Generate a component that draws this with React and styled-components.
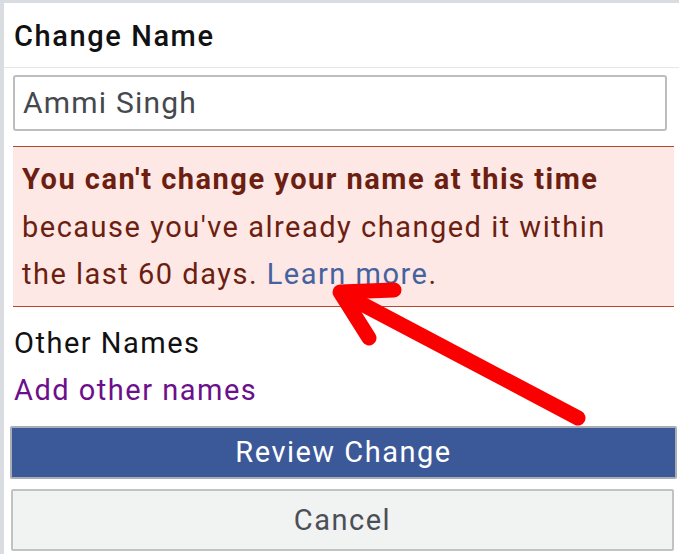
import React from "react";
import styled, { createGlobalStyle } from "styled-components";

const GlobalStyle = createGlobalStyle`
  html, body {
    margin: 0;
    padding: 0;
    background: #d9dde1;
  }
  body {
    font-family: Roboto, "Noto Sans", sans-serif;
    letter-spacing: 1.5px;
  }
`;

const Page = styled.div`
  position: relative;
  width: 679px;
  height: 554px;
  overflow: hidden;
  padding: 3px 0 0 4px;
  box-sizing: border-box;
`;

const Panel = styled.div`
  background: #fff;
  height: 100%;
  display: flex;
  flex-direction: column;
`;

const Header = styled.div`
  height: 64px;
  line-height: 66px;
  padding-left: 10px;
  font-size: 29px;
  font-weight: 500;
  letter-spacing: 1.6px;
  color: #111;
  border-bottom: 1px solid #e4e6e8;
`;

const Body = styled.div`
  display: flex;
  flex-direction: column;
  padding: 7px 0 0 9px;
`;

const NameInput = styled.div`
  width: 654px;
  height: 56px;
  box-sizing: border-box;
  border: 2px solid #bdbdbd;
  border-radius: 3px;
  padding-left: 8px;
  font-size: 30px;
  line-height: 52px;
  letter-spacing: 1.2px;
  color: #45494e;
`;

const Notice = styled.div`
  margin-top: 15px;
  width: 661px;
  box-sizing: border-box;
  background: #fde8e6;
  border-top: 1px solid #b5472f;
  border-bottom: 1px solid #b5472f;
  padding: 9px 9px 7px;
  font-size: 29px;
  line-height: 47.5px;
  color: #6c1f10;
  strong {
    font-weight: 700;
  }
  a {
    color: #46629e;
    text-decoration: none;
  }
`;

const Label = styled.div`
  margin-top: 18px;
  padding-left: 1px;
  font-size: 29px;
  line-height: 36px;
  color: #111;
`;

const AddLink = styled.div`
  margin-top: 11px;
  padding-left: 1px;
  font-size: 29px;
  line-height: 36px;
  color: #6b0f8c;
`;

const Button = styled.div`
  margin-left: ${(p) => (p.$primary ? "-3px" : "-2px")};
  margin-top: ${(p) => (p.$primary ? "18px" : "10px")};
  width: ${(p) => (p.$primary ? "667px" : "663px")};
  height: ${(p) => (p.$primary ? "53px" : "62px")};
  box-sizing: border-box;
  display: flex;
  align-items: center;
  justify-content: center;
  border: 2px solid ${(p) => (p.$primary ? "#a9adb5" : "#c2c2c2")};
  border-radius: 2px;
  background: ${(p) => (p.$primary ? "#3b5998" : "#f1f2f2")};
  color: ${(p) => (p.$primary ? "#fff" : "#4b4f56")};
  font-size: 29px;
`;

const ArrowLayer = styled.svg`
  position: absolute;
  left: 0;
  top: 0;
  pointer-events: none;
`;

const Arrow = () => (
  <ArrowLayer width="679" height="554" viewBox="0 0 679 554">
    <g
      fill="none"
      stroke="#fb0000"
      strokeWidth="15"
      strokeLinecap="round"
      strokeLinejoin="round"
    >
      <path d="M578 418 L343 294" />
      <path d="M394 290 L340 292 L369 338" />
    </g>
  </ArrowLayer>
);

export default function App() {
  return (
    <>
      <GlobalStyle />
      <Page>
        <Panel>
          <Header>Change Name</Header>
          <Body>
            <NameInput>Ammi Singh</NameInput>
            <Notice>
              <strong>You can't change your name at this time</strong>
              <br />
              because you've already changed it within
              <br />
              the last 60 days. <a href="#">Learn more</a>.
            </Notice>
            <Label>Other Names</Label>
            <AddLink>Add other names</AddLink>
            <Button $primary>Review Change</Button>
            <Button>Cancel</Button>
          </Body>
        </Panel>
        <Arrow />
      </Page>
    </>
  );
}
